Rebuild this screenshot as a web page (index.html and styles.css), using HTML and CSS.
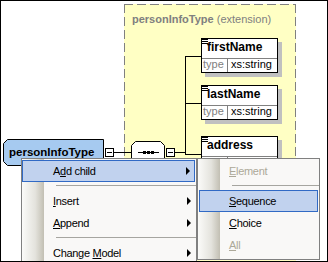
FILE: index.html
```html
<!DOCTYPE html>
<html lang="en">
<head>
    <meta charset="UTF-8">
    <title>personInfoType - Schema Design</title>
    <link rel="stylesheet" href="styles.css">
</head>
<body>
    <div class="screen">
        <!-- extension area -->
        <div class="ext">
            <div class="ext-title"><b>personInfoType</b> (extension)</div>
        </div>

        <!-- connector lines and compositor -->
        <svg class="wires" width="328" height="262" viewBox="1 1 328 262">
            <g stroke="#000" stroke-width="1" fill="none" shape-rendering="crispEdges">
                <line x1="114" y1="152.5" x2="131" y2="152.5"/>
                <line x1="175" y1="152.5" x2="186" y2="152.5"/>
                <line x1="185.5" y1="56" x2="185.5" y2="155"/>
                <line x1="185" y1="56.5" x2="201" y2="56.5"/>
                <line x1="185" y1="103.5" x2="201" y2="103.5"/>
                <line x1="185" y1="154.5" x2="201" y2="154.5"/>
            </g>
            <rect class="minus" x="105.5" y="148.5" width="8" height="8"/>
            <line x1="107" y1="152.5" x2="112" y2="152.5" stroke="#000"/>
            <polygon class="seq" points="135.5,141.5 160.5,141.5 164.5,145.5 164.5,159.5 160.5,163.5 135.5,163.5 131.5,159.5 131.5,145.5"/>
            <line x1="138" y1="152.5" x2="159" y2="152.5" stroke="#000"/>
            <rect x="143" y="151" width="3" height="3" fill="#000"/>
            <rect x="147" y="151" width="3" height="3" fill="#000"/>
            <rect x="151" y="151" width="3" height="3" fill="#000"/>
            <rect class="minus" x="166.5" y="148.5" width="8" height="8"/>
            <line x1="168" y1="152.5" x2="173" y2="152.5" stroke="#000"/>
        </svg>

        <!-- complex type node -->
        <div class="node">
            <svg class="node-shape" width="101" height="27">
                <polygon points="4.5,0.5 100.5,0.5 100.5,26.5 4.5,26.5 0.5,22.5 0.5,4.5"/>
            </svg>
            <span class="node-label">personInfoType</span>
        </div>

        <!-- child elements -->
        <div class="el el-first">
            <div class="el-head"><i class="el-icon"></i>firstName</div>
            <div class="el-row"><span class="el-key">type</span><span class="el-val">xs:string</span></div>
        </div>
        <div class="el el-last">
            <div class="el-head"><i class="el-icon"></i>lastName</div>
            <div class="el-row"><span class="el-key">type</span><span class="el-val">xs:string</span></div>
        </div>
        <div class="el el-addr">
            <div class="el-head"><i class="el-icon"></i>address</div>
            <div class="el-row"><span class="el-key"></span><span class="el-val"></span></div>
        </div>

        <!-- context menu -->
        <div class="menu menu-main">
            <div class="item hot arrow">A<u>d</u>d child</div>
            <div class="sep"></div>
            <div class="item arrow"><u>I</u>nsert</div>
            <div class="item arrow"><u>A</u>ppend</div>
            <div class="sep"></div>
            <div class="item arrow">Change <u>M</u>odel</div>
        </div>

        <div class="menu menu-sub">
            <div class="item off"><u>E</u>lement</div>
            <div class="sep"></div>
            <div class="item hot"><u>S</u>equence</div>
            <div class="item"><u>C</u>hoice</div>
            <div class="item off"><u>A</u>ll</div>
        </div>
    </div>
</body>
</html>
```

FILE: styles.css
```css
* {
    box-sizing: border-box;
    margin: 0;
    padding: 0;
}

body {
    background: #fff;
    font-family: 'Liberation Sans', Arial, sans-serif;
}

.screen {
    position: relative;
    width: 328px;
    height: 262px;
    border: 1px solid #000;
    background: #fff;
    overflow: hidden;
}

/* extension area */
.ext {
    position: absolute;
    left: 123px;
    top: 3px;
    width: 172px;
    height: 300px;
    background:
        repeating-linear-gradient(90deg, #808080 0 9px, transparent 9px 13px) top left / 100% 1px no-repeat,
        repeating-linear-gradient(180deg, #808080 0 9px, transparent 9px 13px) top left / 1px 100% no-repeat,
        repeating-linear-gradient(180deg, #808080 0 9px, transparent 9px 13px) top right / 1px 100% no-repeat,
        #ffffc4;
}

.ext-title {
    padding: 8px 0 0 8px;
    font-size: 11px;
    line-height: 14px;
    color: #808080;
    white-space: nowrap;
}

.wires {
    position: absolute;
    left: 0;
    top: 0;
}

.minus {
    fill: #fff;
    stroke: #000;
}

.seq {
    fill: #fff;
    stroke: #000;
}

/* type node */
.node {
    position: absolute;
    left: 2px;
    top: 138px;
    width: 101px;
    height: 27px;
}

.node-shape {
    position: absolute;
    left: 0;
    top: 0;
}

.node-shape polygon {
    fill: #a6caf0;
    stroke: #000;
}

.node-label {
    position: relative;
    display: block;
    padding: 6px 0 0 6px;
    font-size: 11.5px;
    font-weight: bold;
    line-height: 14px;
    color: #000;
}

/* elements */
.el {
    position: absolute;
    left: 200px;
    width: 77px;
    border: 1px solid #000;
    background: #fff;
    box-shadow: 4px 4px 0 #c0c0c0;
}

.el-first { top: 37px; }
.el-last { top: 84px; }
.el-addr { top: 135px; }

.el-head {
    position: relative;
    height: 20px;
    padding: 1px 0 0 5px;
    border-bottom: 1px solid #808080;
    font-size: 12px;
    font-weight: bold;
    line-height: 14px;
}

.el-icon {
    position: absolute;
    left: 0;
    top: 0;
    width: 6px;
    height: 5px;
    border-top: 1px solid #000;
    border-bottom: 1px solid #000;
}

.el-icon::after {
    content: "";
    position: absolute;
    left: 0;
    top: 1px;
    width: 6px;
    height: 1px;
    background: #000;
}

.el-row {
    display: flex;
    height: 13px;
    font-size: 11px;
    line-height: 11px;
}

.el-key {
    width: 26px;
    padding-left: 1px;
    border-right: 1px solid #808080;
    color: #808080;
}

.el-val {
    padding-left: 3px;
    color: #000;
}

/* context menus */
.menu {
    position: absolute;
    top: 157px;
    border: 1px solid #808080;
    padding: 1px 0;
    font-size: 11px;
    letter-spacing: -0.3px;
    color: #000;
    background:
        linear-gradient(90deg, #fbfbf9, #e4e3dd 60%, #c2bfb3) 0 0 / 22px 100% no-repeat,
        #f9f8f7;
}

.menu-main {
    left: 20px;
    width: 176px;
    height: 112px;
}

.menu-sub {
    left: 196px;
    width: 123px;
    height: 102px;
}

.item {
    position: relative;
    height: 22px;
    line-height: 22px;
    padding-left: 31px;
    white-space: nowrap;
}

.menu-sub .item {
    padding-left: 30px;
    margin: 0 1px;
}

.item.hot {
    background: #c1d2ee;
    border: 1px solid #316ac5;
    line-height: 20px;
    padding-left: 30px;
    margin-right: 1px;
}

.menu-sub .item.hot {
    padding-left: 29px;
}

.item.off {
    color: #aca899;
}

.item.arrow::after {
    content: "";
    position: absolute;
    right: 5px;
    top: 7px;
    border-left: 4px solid #000;
    border-top: 4px solid transparent;
    border-bottom: 4px solid transparent;
}

.item.hot.arrow::after {
    top: 6px;
    right: 4px;
}

.sep {
    height: 8px;
    margin-left: 34px;
    padding-top: 3px;
}

.sep::before {
    content: "";
    display: block;
    height: 1px;
    background: #a6a5a0;
}
```
